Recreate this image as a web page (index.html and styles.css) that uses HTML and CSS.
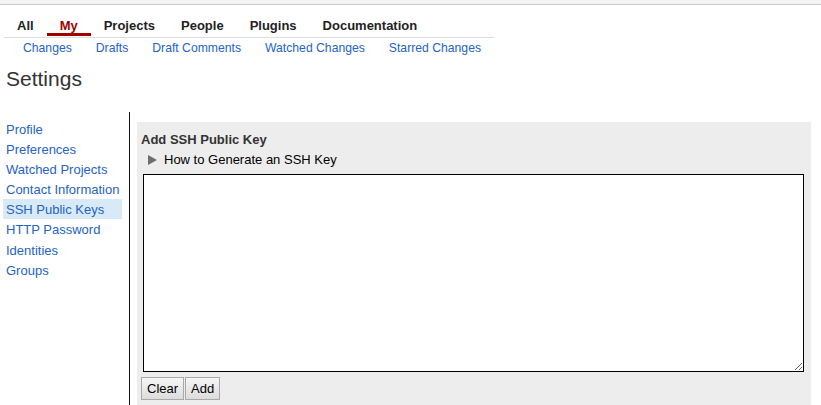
FILE: index.html
```html
<!DOCTYPE html>
<html>
<head>
<meta charset="utf-8">
<link rel="stylesheet" href="styles.css">
</head>
<body>
<div class="topbar"></div>
<div class="menu">
  <div class="tabs">
    <span class="tab">All</span>
    <span class="tab active">My</span>
    <span class="tab">Projects</span>
    <span class="tab">People</span>
    <span class="tab">Plugins</span>
    <span class="tab">Documentation</span>
  </div>
  <div class="submenu">
    <a class="sub">Changes</a>
    <a class="sub">Drafts</a>
    <a class="sub">Draft Comments</a>
    <a class="sub">Watched Changes</a>
    <a class="sub">Starred Changes</a>
  </div>
</div>
<h1 class="title">Settings</h1>
<div class="main">
  <div class="sidebar">
    <a class="item">Profile</a>
    <a class="item">Preferences</a>
    <a class="item">Watched Projects</a>
    <a class="item">Contact Information</a>
    <a class="item selected">SSH Public Keys</a>
    <a class="item">HTTP Password</a>
    <a class="item">Identities</a>
    <a class="item">Groups</a>
  </div>
  <div class="content">
    <div class="panel">
      <div class="heading">Add SSH Public Key</div>
      <div class="disclosure"><span class="tri"></span><span>How to Generate an SSH Key</span></div>
      <textarea class="keybox"></textarea>
      <div class="buttons">
        <button class="btn">Clear</button><button class="btn">Add</button>
      </div>
    </div>
  </div>
</div>
</body>
</html>
```
FILE: styles.css
```css
html, body {
  margin: 0;
  padding: 0;
  background: #fff;
  font-family: "Liberation Sans", Arial, sans-serif;
  font-size: 13px;
  color: #000;
}
.topbar {
  height: 4px;
  background: #f3f3f3;
  border-bottom: 1px solid #c9c9c9;
}
.menu {
  display: inline-block;
  margin-left: 4px;
}
.tabs {
  display: flex;
  padding-top: 13px;
  border-bottom: 1px solid #dddddd;
}
.tab {
  font-weight: bold;
  font-size: 13px;
  line-height: 15px;
  color: #222;
  padding: 0 13px;
  border-bottom: 3px solid transparent;
  margin-bottom: 1px;
}
.tab.active {
  color: #a00000;
  border-bottom-color: #a00000;
}
.submenu {
  display: flex;
  padding: 3px 1px 0 7px;
}
.sub {
  font-size: 12.2px;
  line-height: 14px;
  color: #2563c4;
  padding: 0 12px;
}
.title {
  font-size: 21px;
  font-weight: normal;
  line-height: 24px;
  color: #333;
  margin: 12px 0 21px 0;
  padding-left: 6px;
}
.main {
  display: flex;
  align-items: stretch;
  min-height: 300px;
}
.sidebar {
  width: 129px;
  flex: none;
  padding-top: 7px;
  display: flex;
  flex-direction: column;
}
.item {
  display: block;
  margin-left: 3px;
  width: 116px;
  padding: 3px 0 2px 3px;
  line-height: 15.1px;
  color: #2563c4;
  font-size: 13px;
  white-space: nowrap;
}
.item.selected {
  background: #d8eaf8;
}
.content {
  flex: 1;
  border-left: 1px solid #111;
  padding: 10px 10px 0 7px;
}
.panel {
  background: #ededed;
  padding: 10px 4px 20px 4px;
}
.heading {
  font-weight: bold;
  color: #333;
  line-height: 15px;
}
.disclosure {
  display: flex;
  align-items: center;
  margin-top: 5px;
  padding-left: 7px;
  line-height: 15px;
  color: #000;
}
.tri {
  width: 0;
  height: 0;
  border-top: 5px solid transparent;
  border-bottom: 5px solid transparent;
  border-left: 9px solid #6e6e6e;
  margin-right: 7px;
}
.keybox {
  display: block;
  box-sizing: border-box;
  width: 661px;
  height: 198px;
  margin: 7px 0 0 2px;
  border: 1px solid #000;
  background: #fff;
  padding: 2px;
  font-family: "Liberation Mono", monospace;
}
.buttons {
  display: flex;
  gap: 1px;
  margin-top: 5px;
}
.btn {
  font-family: "Liberation Sans", Arial, sans-serif;
  font-size: 13px;
  line-height: 15px;
  color: #000;
  padding: 3px 5px 3px 5px;
  border: 1px solid #a9a9a9;
  background: linear-gradient(#f6f6f6, #dcdcdc);
  border-radius: 0;
  margin: 0;
}
```
